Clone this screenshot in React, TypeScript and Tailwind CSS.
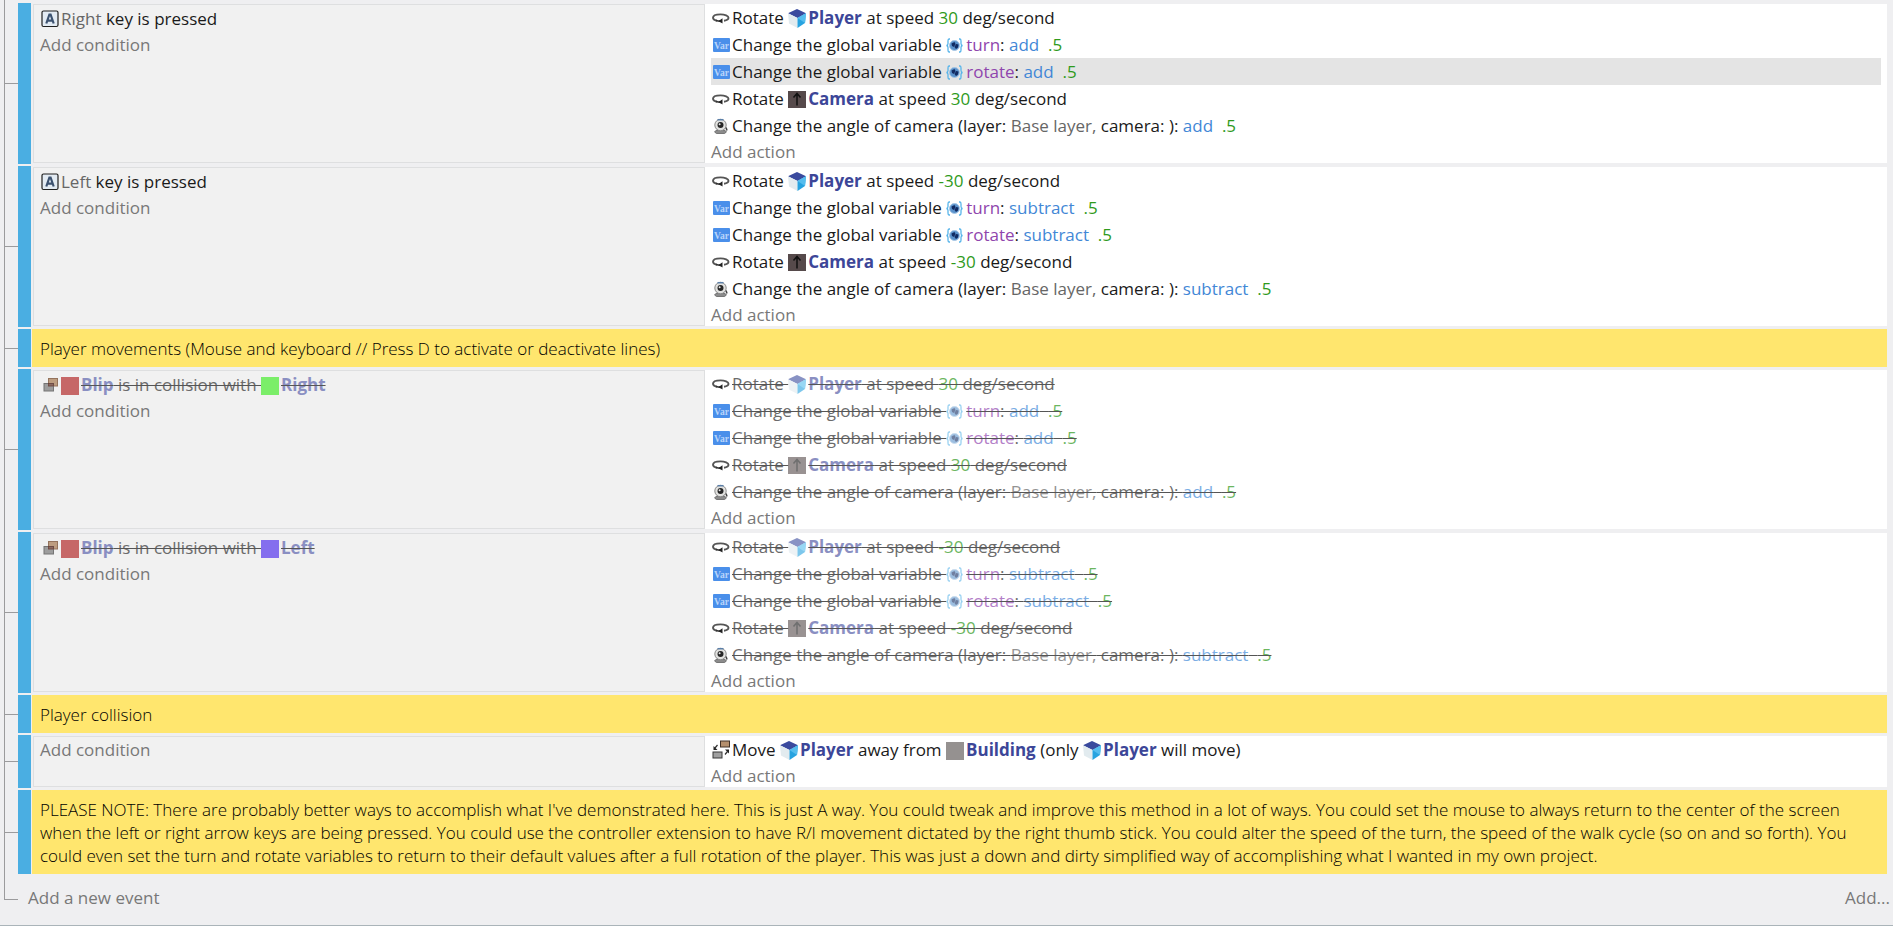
import type { ReactNode } from "react";

type Token =
  | { kind: "text" | "object" | "number" | "operator" | "variable" | "param"; value: string }
  | { kind: "icon"; value: IconName };

type IconName = "rotate" | "var" | "webcam" | "key" | "collision" | "separate" | "player" | "camera" | "global" | "blip" | "right" | "left" | "building";

type Instruction = { icon: IconName; tokens: Token[]; selected?: boolean };

type EventItem =
  | { type: "comment"; text: string }
  | { type: "event"; disabled?: boolean; conditions: Instruction[]; actions: Instruction[] };

const text = (value: string): Token => ({ kind: "text", value });
const object = (value: string): Token => ({ kind: "object", value });
const number = (value: string): Token => ({ kind: "number", value });
const operator = (value: string): Token => ({ kind: "operator", value });
const variable = (value: string): Token => ({ kind: "variable", value });
const param = (value: string): Token => ({ kind: "param", value });
const icon = (value: IconName): Token => ({ kind: "icon", value });

function rotateObject(target: "player" | "camera", name: string, speed: string): Instruction {
  return {
    icon: "rotate",
    tokens: [text("Rotate "), icon(target), object(name), text(" at speed "), number(speed), text(" deg/second")],
  };
}

function changeVariable(name: string, op: string, selected = false): Instruction {
  return {
    icon: "var",
    selected,
    tokens: [text("Change the global variable "), icon("global"), variable(name), text(": "), operator(op), text("  "), number(".5")],
  };
}

function cameraAngle(op: string): Instruction {
  return {
    icon: "webcam",
    tokens: [
      text("Change the angle of camera (layer: "),
      param("Base layer,"),
      text(" camera: ): "),
      operator(op),
      text("  "),
      number(".5"),
    ],
  };
}

function turnActions(speed: string, op: string, selected = false): Instruction[] {
  return [
    rotateObject("player", "Player", speed),
    changeVariable("turn", op),
    changeVariable("rotate", op, selected),
    rotateObject("camera", "Camera", speed),
    cameraAngle(op),
  ];
}

function keyPressed(key: string): Instruction {
  return { icon: "key", tokens: [param(key), text(" key is pressed")] };
}

function collidesWith(target: "right" | "left", name: string): Instruction {
  return {
    icon: "collision",
    tokens: [icon("blip"), object("Blip"), text(" is in collision with "), icon(target), object(name)],
  };
}

const events: EventItem[] = [
  { type: "event", conditions: [keyPressed("Right")], actions: turnActions("30", "add", true) },
  { type: "event", conditions: [keyPressed("Left")], actions: turnActions("-30", "subtract") },
  { type: "comment", text: "Player movements (Mouse and keyboard // Press D to activate or deactivate lines)" },
  { type: "event", disabled: true, conditions: [collidesWith("right", "Right")], actions: turnActions("30", "add") },
  { type: "event", disabled: true, conditions: [collidesWith("left", "Left")], actions: turnActions("-30", "subtract") },
  { type: "comment", text: "Player collision" },
  {
    type: "event",
    conditions: [],
    actions: [
      {
        icon: "separate",
        tokens: [
          text("Move "),
          icon("player"),
          object("Player"),
          text(" away from "),
          icon("building"),
          object("Building"),
          text(" (only "),
          icon("player"),
          object("Player"),
          text(" will move)"),
        ],
      },
    ],
  },
  {
    type: "comment",
    text: "PLEASE NOTE: There are probably better ways to accomplish what I've demonstrated here. This is just A way. You could tweak and improve this method in a lot of ways. You could set the mouse to always return to the center of the screen when the left or right arrow keys are being pressed. You could use the controller extension to have R/l movement dictated by the right thumb stick. You could alter the speed of the turn, the speed of the walk cycle (so on and so forth). You could even set the turn and rotate variables to return to their default values after a full rotation of the player. This was just a down and dirty simplified way of accomplishing what I wanted in my own project.",
  },
];

const iconShapes: Record<IconName, ReactNode> = {
  rotate: (
    <>
      <path d="M5 12.700C2.600 12.200 1 11.200 1 9.800c0-2 3.200-3.400 7.500-3.400S16.500 7.800 16.500 9.800c0 1.500-2 2.600-4.500 3" fill="none" stroke="#555" strokeWidth="1.900" />
      <path d="M4 12.500c1.600.6 3.800.8 6 .7" fill="none" stroke="#333" strokeWidth="1.800" />
      <path d="M10.500 10.200v5.300L6.500 12.900z" fill="#222" />
    </>
  ),
  var: (
    <>
      <rect x="1" y="3" width="17" height="14" rx="1" fill="#4a8fea" />
      <text x="9.500" y="13.500" textAnchor="middle" fontFamily="Liberation Serif, serif" fontSize="9.500" fontWeight="700" fill="#b9d5fa">
        Var
      </text>
    </>
  ),
  webcam: (
    <>
      <path d="M4.500 14h8l2 2-2 1.500h-8l-2-1.500z" fill="#8b8b8b" stroke="#555" strokeWidth=".7" />
      <circle cx="8.500" cy="9" r="5.700" fill="#e2e2e0" stroke="#8d8d8d" />
      <path d="M5.500 3.700h6" stroke="#5b7fa8" strokeWidth="1.500" />
      <circle cx="8.500" cy="9" r="3" fill="#262626" />
      <circle cx="7.600" cy="8.200" r="1" fill="#e8e8e8" />
      <path d="M14 11.500l1 3" stroke="#444" strokeWidth="1.500" />
    </>
  ),
  key: (
    <>
      <rect x="1" y="2" width="16" height="15.500" rx="1.500" fill="#e3ebf3" stroke="#1f1f1f" strokeWidth="1.200" />
      <path d="M5.300 14.500L8.400 5.500h1.200L12.700 14.500M6.700 11.600h4.600" fill="none" stroke="#3c5270" strokeWidth="2.200" />
    </>
  ),
  collision: (
    <>
      <rect x="7.500" y="3.500" width="9" height="7.500" fill="#bd9d80" stroke="#94735c" />
      <rect x="3" y="8.500" width="9.500" height="7.500" fill="#939393" fillOpacity=".9" stroke="#757575" />
      <rect x="7.500" y="8.500" width="5" height="2.500" fill="#896960" stroke="#683e36" strokeWidth=".7" />
    </>
  ),
  separate: (
    <>
      <rect x="8.500" y="1" width="9" height="6" fill="#b48f6d" stroke="#403229" />
      <rect x="1" y="12" width="9" height="6" fill="#a0a0a0" stroke="#383838" />
      <path d="M5.500 5L3 8M13 14.500l2.500-3" stroke="#333" strokeWidth="1.200" />
      <path d="M1.500 6v4h4zM17 13.500v-4h-4z" fill="#222" />
    </>
  ),
  player: (
    <>
      <path d="M9 0l9 4.300L9.500 9 0 4.300z" fill="#3a4a9e" />
      <path d="M0 4.300L9.500 9v10L1 14.500z" fill="#e2ebef" />
      <path d="M18 4.300L9.500 9v10L17 14z" fill="#27a3e0" />
      <path d="M18 4.300L17 14l-7.500-5z" fill="#55bdee" />
    </>
  ),
  camera: (
    <>
      <rect y="1" width="18" height="17" fill="#564a4b" />
      <path d="M9 15.500V4M5.500 7.500L9 3.500l3.500 4" fill="none" stroke="#111" strokeWidth="1.500" />
    </>
  ),
  global: (
    <>
      <path d="M4 3H3C2 3 2 3.700 2 5v2.500C2 8.700 1.500 9.300.5 9.500c1 .2 1.500.8 1.500 2V14c0 1.300 0 2 1 2h1M13 3h1c1 0 1 .7 1 2v2.500c0 1.200.5 1.800 1.500 2-1 .2-1.500.8-1.500 2V14c0 1.300 0 2-1 2h-1" fill="none" stroke="#56b4ea" strokeWidth="1.300" />
      <circle cx="8.500" cy="9.500" r="5" fill="#5b93cc" stroke="#a6c6e4" />
      <path d="M5.500 7.500l3-1.500 1 2-1.500 3-2-1zM10 8l2.500.5-.5 3-2 1.500-1.500-2z" fill="#122b62" />
    </>
  ),
  blip: <rect y="1" width="18" height="18" fill="#c66767" />,
  right: <rect y="1" width="18" height="18" fill="#7bee69" />,
  left: <rect y="1" width="18" height="18" fill="#846eee" />,
  building: <rect y="1" width="18" height="18" fill="#959190" />,
};

function Icon({ name, faded }: { name: IconName; faded?: boolean }) {
  return (
    <svg viewBox="0 0 18 19" className={`block h-[19px] w-[18px] shrink-0 ${faded ? "opacity-60" : ""}`} aria-hidden="true">
      {iconShapes[name]}
    </svg>
  );
}

const tokenStyles = {
  text: "",
  object: "font-bold text-[#3c4698]",
  number: "text-[#2f9a1c]",
  operator: "text-[#4287d6]",
  variable: "text-[#8f45ad]",
  param: "text-[#666]",
};

const disabledTokenStyles = {
  text: "",
  object: "font-bold text-[#8a8fc2]",
  number: "text-[#6cb65f]",
  operator: "text-[#7aade4]",
  variable: "text-[#b380c8]",
  param: "text-[#939393]",
};

const solidIcons: IconName[] = ["blip", "right", "left"];

function InstructionRow({ instruction, disabled }: { instruction: Instruction; disabled?: boolean }) {
  const styles = disabled ? disabledTokenStyles : tokenStyles;

  return (
    <li className={`flex h-[27px] items-center gap-[2px] pl-px whitespace-pre ${instruction.selected ? "bg-[#e4e4e4]" : ""}`}>
      <Icon name={instruction.icon} />
      <span className={disabled ? "text-[#6b6b6b] line-through decoration-[#555] decoration-1" : "text-[#1a1a1a]"}>
        {instruction.tokens.map((token, index) =>
          token.kind === "icon" ? (
            <span key={index} className="mr-[2px] inline-block align-[-4px]">
              <Icon name={token.value} faded={disabled && !solidIcons.includes(token.value)} />
            </span>
          ) : (
            <span key={index} className={styles[token.kind]}>
              {token.value}
            </span>
          ),
        )}
      </span>
    </li>
  );
}

function AddButton({ children }: { children: ReactNode }) {
  return (
    <button type="button" className="block h-6 text-left leading-[26px] text-[#787878]">
      {children}
    </button>
  );
}

function EventRow({ item }: { item: EventItem }) {
  return (
    <li className="flex">
      <span className="h-px w-[13px] shrink-0 self-center bg-[#9b9b9d]" />
      <span className="w-[13px] shrink-0 bg-[#4aaee2]" />
      {item.type === "comment" ? (
        <p className="ml-px flex-1 bg-[#ffe66e] px-2 pt-2 pb-[7px] leading-[23px] font-light text-black">{item.text}</p>
      ) : (
        <div className="ml-[2px] flex flex-1 py-px">
          <div className="w-[672px] max-w-[37%] shrink-0 border border-[#dedfe0] bg-[#f1f1f1] pl-[6px]">
            <ul>
              {item.conditions.map((condition, index) => (
                <InstructionRow key={index} instruction={condition} disabled={item.disabled} />
              ))}
            </ul>
            <AddButton>Add condition</AddButton>
          </div>
          <div className="min-w-0 flex-1 bg-white px-[6px]">
            <ul>
              {item.actions.map((action, index) => (
                <InstructionRow key={index} instruction={action} disabled={item.disabled} />
              ))}
            </ul>
            <AddButton>Add action</AddButton>
          </div>
        </div>
      )}
    </li>
  );
}

export default function App() {
  return (
    <main className="flex min-h-screen flex-col border-b border-[#aab4b9] bg-[#efeff1] font-['Open_Sans','Noto_Sans',sans-serif] text-[17px]">
      <ul className="ml-1 flex flex-col gap-[2px] border-l border-[#9b9b9d] pt-[3px] pr-[6px]">
        {events.map((item, index) => (
          <EventRow key={index} item={item} />
        ))}
      </ul>
      <footer className="flex items-start justify-between pr-[3px] pl-1">
        <div className="flex">
          <span className="h-[26px] w-[14px] border-b border-l border-[#9b9b9d]" />
          <div className="pt-[11px] pl-[10px]">
            <AddButton>Add a new event</AddButton>
          </div>
        </div>
        <div className="pt-[11px]">
          <AddButton>Add...</AddButton>
        </div>
      </footer>
    </main>
  );
}
